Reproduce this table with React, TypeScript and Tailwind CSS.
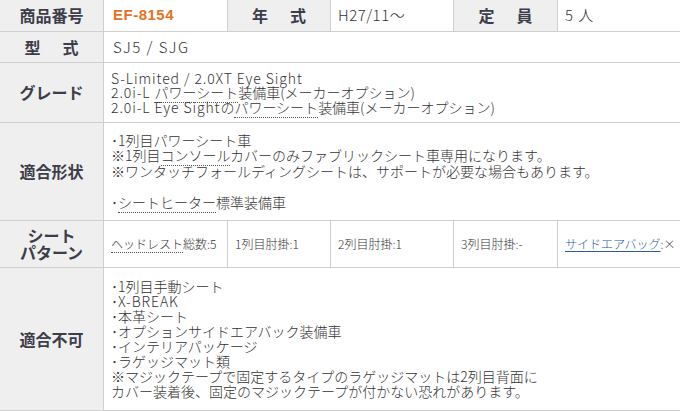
import React from 'react';

const font = { fontFamily: '"Noto Sans CJK JP", "Liberation Sans", sans-serif' };

const Head = ({ children }: { children: React.ReactNode }) => (
  <div className="bg-[#efefef] flex flex-col items-center justify-center text-[16px] leading-[17px] font-bold text-[#3d3d4a]">
    {children}
  </div>
);

const Cell = ({ children, className = '', size = 'text-[14px]' }: { children: React.ReactNode; className?: string; size?: string }) => (
  <div className={`bg-white flex flex-col justify-center pl-[7px] font-light text-[#333] ${size} ${className}`}>
    {children}
  </div>
);

const Dot = ({ children }: { children: React.ReactNode }) => (
  <span className="border-b border-dotted border-[#555]">{children}</span>
);

// latin runs are a bit wider in the original
const L = ({ children }: { children: React.ReactNode }) => <span className="tracking-[0.9px]">{children}</span>;

const Spaced = ({ a, b }: { a: string; b: string }) => (
  <span className="flex gap-[22px]">
    <span>{a}</span>
    <span>{b}</span>
  </span>
);

export default function App() {
  return (
    <div style={font} className="w-[680px] h-[411px] bg-white">
      <div className="grid grid-cols-[103px_123px_102px_122px_103px_1fr] grid-rows-[31px_30px_59px_97px_46px_142px] gap-px bg-[#cfcfcf] border-b border-[#cfcfcf]">
        <Head>商品番号</Head>
        <Cell className="pl-[9px]">
          <span style={{ fontFamily: '"Liberation Sans", sans-serif' }} className="text-[15px] font-bold text-[#e5721f] tracking-[0.5px]">EF-8154</span>
        </Cell>
        <Head><Spaced a="年" b="式" /></Head>
        <Cell size="text-[15px]"><span className="tracking-[0.5px]">H27/11〜</span></Cell>
        <Head><Spaced a="定" b="員" /></Head>
        <Cell size="text-[15px]"><span className="tracking-[1px]">5 人</span></Cell>

        <Head><Spaced a="型" b="式" /></Head>
        <Cell className="col-span-5 pl-[9px]" size="text-[15px]"><span className="tracking-[1.5px]">SJ5 / SJG</span></Cell>

        <Head>グレード</Head>
        <Cell className="col-span-5 leading-[14.5px]">
          <div><L>S-Limited / 2.0XT Eye Sight</L></div>
          <div><L>2.0i-L </L><Dot>パワーシート</Dot>装備車(メーカーオプション)</div>
          <div><L>2.0i-L Eye Sight</L>の<Dot>パワーシート</Dot>装備車(メーカーオプション)</div>
        </Cell>

        <Head>適合形状</Head>
        <Cell className="col-span-5 leading-[15.5px]">
          <div>･1列目パワーシート車</div>
          <div>※1列目<Dot>コンソール</Dot>カバーのみファブリックシート車専用になります。</div>
          <div>※ワンタッチフォールディングシートは、サポートが必要な場合もあります。</div>
          <div>&nbsp;</div>
          <div>･<Dot>シートヒーター</Dot>標準装備車</div>
        </Cell>

        <Head>
          <span>シート</span>
          <span>パターン</span>
        </Head>
        <Cell className="whitespace-nowrap" size="text-[12px]"><span><Dot>ヘッドレスト</Dot>総数:5</span></Cell>
        <Cell className="whitespace-nowrap" size="text-[12px]">1列目肘掛:1</Cell>
        <Cell className="whitespace-nowrap" size="text-[12px]">2列目肘掛:1</Cell>
        <Cell className="whitespace-nowrap" size="text-[12px]">3列目肘掛:-</Cell>
        <Cell className="whitespace-nowrap pl-[6px]" size="text-[12px]">
          <span>
            <span className="text-[#2a5aa8] underline underline-offset-2">サイドエアバッグ</span>:×
          </span>
        </Cell>

        <Head>適合不可</Head>
        <Cell className="col-span-5 leading-[15px]">
          <div>･1列目手動シート</div>
          <div>･<L>X-BREAK</L></div>
          <div>･本革シート</div>
          <div>･オプションサイドエアバック装備車</div>
          <div>･インテリアパッケージ</div>
          <div>･ラゲッジマット類</div>
          <div>※マジックテープで固定するタイプのラゲッジマットは2列目背面に</div>
          <div>カバー装着後、固定のマジックテープが付かない恐れがあります。</div>
        </Cell>
      </div>
    </div>
  );
}
